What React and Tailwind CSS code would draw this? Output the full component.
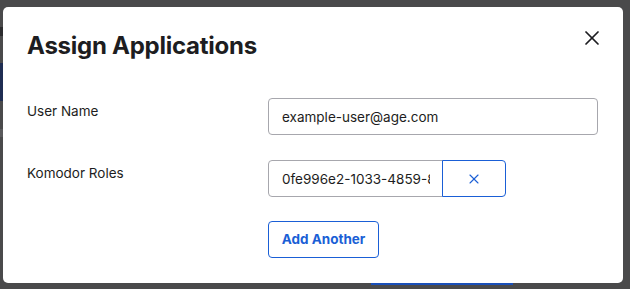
import React from 'react';
import { X } from 'lucide-react';

const font = { fontFamily: 'Inter, "Noto Sans", sans-serif' };

const FormRow = ({ label, children }) => (
    <div className="flex items-start">
        <div className="w-[241px] shrink-0 pt-[3px] text-[13.5px] leading-5 text-[#1d1d21]">{label}</div>
        <div className="flex flex-col gap-6">{children}</div>
    </div>
);

const App = () => {
    return (
        <div className="w-[630px] h-[289px] overflow-hidden bg-[#4a4a4b] flex" style={font}>
            {/* page peeking out behind the overlay */}
            <div className="w-[3px] shrink-0 flex flex-col">
                <div className="h-[27px]" />
                <div className="h-[9px] bg-[#2c2c2e]" />
                <div className="h-[27px]" />
                <div className="h-[38px] bg-[#1f2d52]" />
                <div className="h-[28px]" />
                <div className="h-[8px] bg-[#5a5a5c]" />
            </div>

            <div className="flex flex-col">
                <div className="h-[7px] shrink-0" />
                <div className="w-[620px] h-[276px] shrink-0 bg-white rounded-[5px] flex flex-col">
                    <div className="flex items-start justify-between pl-6 pr-[19px] pt-[23px]">
                        <h2 className="text-2xl leading-8 font-bold text-[#1d1d21] tracking-[-0.25px]">Assign Applications</h2>
                        <button className="mt-[-4px] text-[#1d1d21]">
                            <X size={24} strokeWidth={1.7} />
                        </button>
                    </div>

                    <div className="flex flex-col gap-[25px] pl-6 mt-[36px]">
                        <FormRow label="User Name">
                            <input
                                readOnly
                                value="example-user@age.com"
                                className="w-[330px] h-[37px] px-[13px] border border-[#a7a7ad] rounded-[4px] text-[13.5px] text-[#1d1d21] outline-none"
                            />
                        </FormRow>

                        <FormRow label="Komodor Roles">
                            <div className="flex">
                                <input
                                    readOnly
                                    value="0fe996e2-1033-4859-8a2c-7d1e"
                                    className="w-[175px] h-[37px] pl-[13px] pr-3 border border-[#a7a7ad] rounded-l-[4px] text-[13.5px] text-[#1d1d21] outline-none"
                                />
                                <button className="w-[64px] h-[37px] flex items-center justify-center border border-[#1a5fd6] rounded-r-[4px] text-[#1a5fd6] -ml-px">
                                    <X size={16} strokeWidth={1.6} />
                                </button>
                            </div>
                            <button className="w-[111px] h-[37px] flex items-center justify-center border border-[#1a5fd6] rounded-[4px] text-[13.5px] font-bold text-[#1a5fd6]">
                                Add Another
                            </button>
                        </FormRow>
                    </div>
                </div>
                <div className="flex">
                    <div className="w-[368px]" />
                    <div className="w-[142px] h-[2px] bg-[#1a4fb8]" />
                </div>
            </div>
        </div>
    );
};

export default App;
